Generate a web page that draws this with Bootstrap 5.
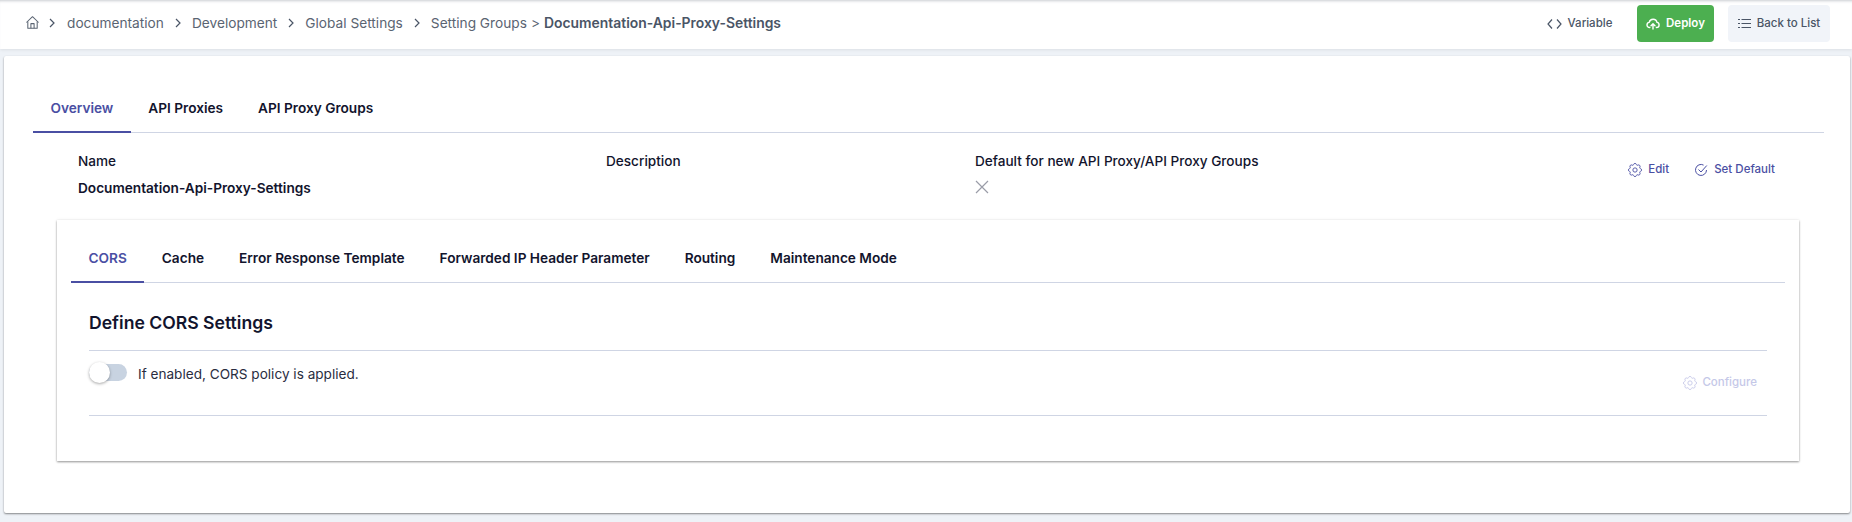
<!doctype html>
<html lang="en">
<head>
<meta charset="utf-8">
<title>Documentation-Api-Proxy-Settings</title>
<link href="https://cdn.jsdelivr.net/npm/bootstrap@5.3.0/dist/css/bootstrap.min.css" rel="stylesheet">
<style>
html,body{height:522px;overflow:hidden}
body{font-family:Inter,"Liberation Sans",sans-serif;background:#eef2f7;color:#12142d;font-size:13px}
.topbar{height:49px;background:#fff;padding:0 22px 2px 25px;box-shadow:inset 0 3px 3px -2px #c9ccd1,0 1px 3px rgba(0,0,0,.08)}
.crumbs{font-size:13.7px;color:#5a6472;padding-bottom:1px}
.crumbs svg{flex:none}
.crumbs .sep{margin:0 10px;display:flex}
.crumbs .sep.first{margin:0 11px 0 8px}
.crumbs b{font-weight:600;color:#4a5566;margin-left:4px;font-size:13.9px}
.crumbs .tight{margin-left:4px}
.tbtn{font-size:11.5px;font-weight:500;height:37px;border:0;border-radius:4px;display:flex;align-items:center;gap:6px;white-space:nowrap;justify-content:center}
.tbtn-plain{color:#4a5566;background:transparent;width:89px;margin-right:13px;padding:0}
.tbtn-deploy{background:#4caf50;color:#fff;font-weight:600;width:77px;margin-right:14px;padding:0}
.tbtn-back{background:#f1f4f9;color:#4a5566;width:102px;padding:0}
.sheet{margin:7px 2px 0 4px;height:457px;background:#fff;border-radius:2px;padding:0 26px 0 29px;box-shadow:0 1px 2px rgba(0,0,0,.45)}
.tabrow{border-bottom:1px solid #cfd5e4;list-style:none;margin:0;padding:0;display:flex}
.tabrow a{display:block;text-decoration:none;font-size:13.65px;font-weight:600;color:#12142d;padding:0 17.5px;margin-bottom:-1px;border-bottom:2px solid transparent}
.tabrow a.on{color:#4a4fa3;border-bottom-color:#4a4fa3}
.outer{padding-top:31px}
.outer a{height:46px;line-height:42px}
.meta{padding:18px 49px 0 45px;height:87px;font-size:13.6px;font-weight:500;color:#12142d}
.meta .c1{width:528px}
.meta .c2{width:369px}
.meta .lbl{line-height:20px;margin-bottom:5px}
.meta .val{font-weight:600;font-size:13.65px;line-height:20px;margin-top:7px}
.acts{font-size:11.5px;font-weight:500;color:#4a4fa3;gap:25px;padding-top:10px;align-items:flex-start}
.acts span{display:flex;align-items:center;gap:6px}
.panel{margin-left:24px;width:1742px;height:241px;padding:0 14px;background:#fff;box-shadow:0 1px 2px rgba(0,0,0,.4),0 0 4px rgba(0,0,0,.06)}
.inner{padding-top:14px}
.inner a{height:49px;line-height:48px}
.body-wrap{padding:0 18px}
.ptitle{font-size:17.6px;font-weight:600;color:#12142d;margin:0;height:68px;line-height:79px;border-bottom:1px solid #cfd5e4}
.prow{height:65px;border-bottom:1px solid #cfd5e4}
.tog{width:38px;height:17px;border-radius:9px;background:#c8d3e1;position:relative;margin-top:13px;flex:none}
.tog i{position:absolute;left:0;top:-2px;width:21px;height:21px;border-radius:50%;background:#fff;box-shadow:0 1px 3px rgba(0,0,0,.35)}
.ptext{font-size:13.6px;color:#2a2d3f;margin:13px 0 0 11px;line-height:20px}
.cfg{font-size:11.5px;font-weight:500;color:#c5c8e8;gap:5px;margin:22px 10px 0 auto;height:20px}
</style>
</head>
<body>
<header class="topbar d-flex align-items-center justify-content-between">
  <nav class="crumbs d-flex align-items-center">
    <svg width="15" height="15" viewBox="0 0 16 16" fill="none" stroke="#5a6472" stroke-width="1.1" stroke-linejoin="round"><path d="M1.5 8 8 1.8 14.5 8"/><path d="M3 6.8V14.2H13V6.8"/><path d="M6.3 14.2V9.2H9.7V14.2"/></svg>
    <span class="sep first"><svg width="8" height="10" viewBox="0 0 8 10" fill="none" stroke="#4a5566" stroke-width="1.2"><path d="M2 1l4 4-4 4"/></svg></span>
    <span>documentation</span>
    <span class="sep"><svg width="8" height="10" viewBox="0 0 8 10" fill="none" stroke="#4a5566" stroke-width="1.2"><path d="M2 1l4 4-4 4"/></svg></span>
    <span>Development</span>
    <span class="sep"><svg width="8" height="10" viewBox="0 0 8 10" fill="none" stroke="#4a5566" stroke-width="1.2"><path d="M2 1l4 4-4 4"/></svg></span>
    <span>Global Settings</span>
    <span class="sep"><svg width="8" height="10" viewBox="0 0 8 10" fill="none" stroke="#4a5566" stroke-width="1.2"><path d="M2 1l4 4-4 4"/></svg></span>
    <span>Setting Groups</span>
    <span class="tight">&gt;</span>
    <b>Documentation-Api-Proxy-Settings</b>
  </nav>
  <div class="d-flex align-items-center">
    <button class="tbtn tbtn-plain" type="button"><svg width="15" height="12" viewBox="0 0 15 12" fill="none" stroke="#4a5566" stroke-width="1.2"><path d="M5 1.5 1 6l4 4.5M10 1.5 14 6l-4 4.5"/></svg>Variable</button>
    <button class="tbtn tbtn-deploy" type="button"><svg width="14" height="12" viewBox="0 0 14 12" fill="none" stroke="#fff" stroke-width="1.4" stroke-linecap="round" stroke-linejoin="round"><path d="M3.8 9.5C2 9.5 1 8.3 1 6.9 1 5.6 2 4.6 3.2 4.4 3.6 2.5 5.2 1.2 7.1 1.2c2 0 3.6 1.4 3.9 3.2 1.2.2 2.1 1.2 2.1 2.5 0 1.4-1 2.6-2.7 2.6"/><path d="M7 11V6M5 7.8 7 5.8l2 2"/></svg>Deploy</button>
    <button class="tbtn tbtn-back" type="button"><svg width="13" height="11" viewBox="0 0 13 11" fill="none" stroke="#4a5566" stroke-width="1.2"><path d="M3.5 1.5H13M3.5 5.5H13M3.5 9.5H13M0 1.5H2M0 5.5H2M0 9.5H2"/></svg>Back to List</button>
  </div>
</header>
<main class="sheet">
  <ul class="tabrow outer">
    <li><a class="on" href="#">Overview</a></li>
    <li><a href="#">API Proxies</a></li>
    <li><a href="#">API Proxy Groups</a></li>
  </ul>
  <section class="meta d-flex">
    <div class="c1"><div class="lbl">Name</div><div class="val">Documentation-Api-Proxy-Settings</div></div>
    <div class="c2"><div class="lbl">Description</div></div>
    <div class="flex-grow-1"><div class="lbl">Default for new API Proxy/API Proxy Groups</div>
      <svg width="14" height="14" viewBox="0 0 14 14" fill="none" stroke="#9a9ca8" stroke-width="1.2"><path d="M1 1l12 12M13 1 1 13"/></svg>
    </div>
    <div class="acts d-flex">
      <span><svg width="14" height="14" viewBox="-.5 -.5 17 17" fill="none" stroke="#4a4fa3" stroke-width="1.1"><circle cx="8" cy="8" r="2.6"/><path d="M9.796 1.343c-.527-1.79-3.065-1.79-3.592 0l-.094.319a.873.873 0 0 1-1.255.52l-.292-.16c-1.64-.892-3.433.902-2.54 2.541l.159.292a.873.873 0 0 1-.52 1.255l-.319.094c-1.79.527-1.79 3.065 0 3.592l.319.094a.873.873 0 0 1 .52 1.255l-.16.292c-.892 1.64.901 3.434 2.541 2.54l.292-.159a.873.873 0 0 1 1.255.52l.094.319c.527 1.79 3.065 1.79 3.592 0l.094-.319a.873.873 0 0 1 1.255-.52l.292.16c1.64.893 3.434-.902 2.54-2.541l-.159-.292a.873.873 0 0 1 .52-1.255l.319-.094c1.79-.527 1.79-3.065 0-3.592l-.319-.094a.873.873 0 0 1-.52-1.255l.16-.292c.893-1.64-.902-3.433-2.541-2.54l-.292.159a.873.873 0 0 1-1.255-.52l-.094-.319z"/></svg>Edit</span>
      <span><svg width="14" height="14" viewBox="0 0 14 14" fill="none" stroke="#4a4fa3" stroke-width="1"><path d="M12.5 7A5.5 5.5 0 1 1 9.6 2.1"/><path d="M4.5 6.5 7 9l5.8-6.5"/></svg>Set Default</span>
    </div>
  </section>
  <section class="panel">
    <ul class="tabrow inner">
      <li><a class="on" href="#">CORS</a></li>
      <li><a href="#">Cache</a></li>
      <li><a href="#">Error Response Template</a></li>
      <li><a href="#">Forwarded IP Header Parameter</a></li>
      <li><a href="#">Routing</a></li>
      <li><a href="#">Maintenance Mode</a></li>
    </ul>
    <div class="body-wrap">
      <h2 class="ptitle">Define CORS Settings</h2>
      <div class="prow d-flex">
        <div class="tog"><i></i></div>
        <div class="ptext">If enabled, CORS policy is applied.</div>
        <div class="cfg d-flex align-items-center"><svg width="14" height="14" viewBox="-.5 -.5 17 17" fill="none" stroke="#c5c8e8" stroke-width="1.1"><circle cx="8" cy="8" r="2.6"/><path d="M9.796 1.343c-.527-1.79-3.065-1.79-3.592 0l-.094.319a.873.873 0 0 1-1.255.52l-.292-.16c-1.64-.892-3.433.902-2.54 2.541l.159.292a.873.873 0 0 1-.52 1.255l-.319.094c-1.79.527-1.79 3.065 0 3.592l.319.094a.873.873 0 0 1 .52 1.255l-.16.292c-.892 1.64.901 3.434 2.541 2.54l.292-.159a.873.873 0 0 1 1.255.52l.094.319c.527 1.79 3.065 1.79 3.592 0l.094-.319a.873.873 0 0 1 1.255-.52l.292.16c1.64.893 3.434-.902 2.54-2.541l-.159-.292a.873.873 0 0 1 .52-1.255l.319-.094c1.79-.527 1.79-3.065 0-3.592l-.319-.094a.873.873 0 0 1-.52-1.255l.16-.292c.893-1.64-.902-3.433-2.541-2.54l-.292.159a.873.873 0 0 1-1.255-.52l-.094-.319z"/></svg>Configure</div>
      </div>
    </div>
  </section>
</main>
<script src="https://cdn.jsdelivr.net/npm/bootstrap@5.3.0/dist/js/bootstrap.bundle.min.js"></script>
</body>
</html>
